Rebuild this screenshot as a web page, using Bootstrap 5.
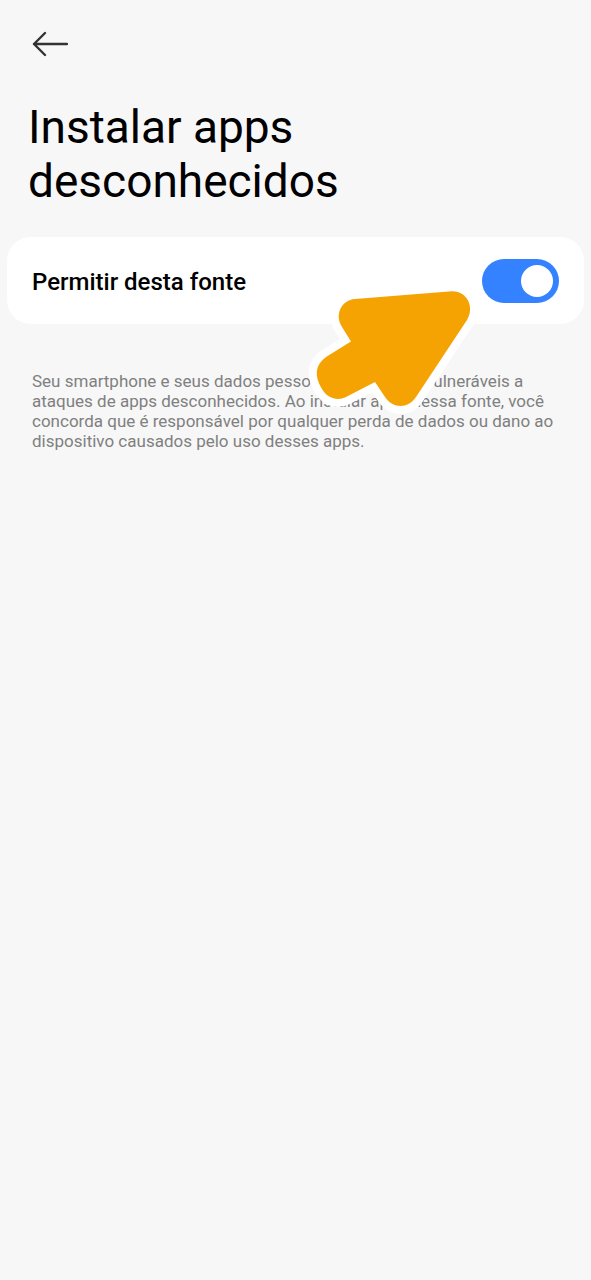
<!DOCTYPE html>
<html lang="pt-BR">
<head>
<meta charset="utf-8">
<meta name="viewport" content="width=device-width, initial-scale=1">
<title>Instalar apps desconhecidos</title>
<link href="https://cdn.jsdelivr.net/npm/bootstrap@5.3.0/dist/css/bootstrap.min.css" rel="stylesheet">
<style>
body{background:#f7f7f7;font-family:Roboto,sans-serif;color:#000}
.top-bar{padding:26px 32px 0}
.back-btn{width:36px;height:36px}
.page-title{font-size:46px;line-height:54px;font-weight:400;padding:38px 28px 0;max-width:400px}
.setting-row{margin:29px 7px 0;height:87px;border-radius:24px;padding:0 25px}
.setting-label{font-size:24px;line-height:32px;font-weight:500;padding-top:2px}
.switch-box{padding:0;min-height:0}
.form-check .toggle-input{width:77px;height:44px;margin:0;float:none;border:0;border-radius:22px;background-color:#3482ff;display:block;
background-image:url("data:image/svg+xml,%3csvg xmlns='http://www.w3.org/2000/svg' viewBox='0 0 77 44'%3e%3ccircle cx='55' cy='22' r='16' fill='white'/%3e%3c/svg%3e")!important;background-size:100% 100%;background-position:center}
.pointer-arrow{right:104px;top:43px;width:180px;height:140px;pointer-events:none}
.notice{font-size:17px;line-height:20px;color:#808080;padding:47px 31px 0 32px}
</style>
</head>
<body>
<header class="top-bar">
<button type="button" class="back-btn btn p-0 border-0 d-block" aria-label="Voltar">
<svg class="d-block" width="36" height="36" viewBox="0 0 36 36" fill="none" stroke="#333" stroke-width="2.4" stroke-linecap="round" stroke-linejoin="round"><path d="M35 18H2M13 7L2 18l11 11"/></svg>
</button>
</header>
<main>
<h1 class="page-title m-0">Instalar apps desconhecidos</h1>
<section class="setting-row bg-white d-flex align-items-center justify-content-between position-relative">
<label class="setting-label" for="allow">Permitir desta fonte</label>
<div class="form-check form-switch switch-box m-0"><input class="form-check-input toggle-input" type="checkbox" role="switch" id="allow" checked></div>
<svg class="pointer-arrow position-absolute" viewBox="0 0 180 140" aria-hidden="true"><path d="M55 19L152 11.3C167 11 175 27 167 40L116 117C108 129 93 129 85 117L75 102L46 117C38 121 28 119 22 109C14 96 15 85 26 77L51 61.5L42 47C34 34 42 20 55 19Z" fill="#f5a302" stroke="#fff" stroke-width="16" stroke-linejoin="round" paint-order="stroke"/></svg>
</section>
<p class="notice m-0">Seu smartphone e seus dados pessoais estão mais vulneráveis a ataques de apps desconhecidos. Ao instalar apps dessa fonte, você concorda que é responsável por qualquer perda de dados ou dano ao dispositivo causados pelo uso desses apps.</p>
</main>
<script src="https://cdn.jsdelivr.net/npm/bootstrap@5.3.0/dist/js/bootstrap.bundle.min.js"></script>
</body>
</html>
